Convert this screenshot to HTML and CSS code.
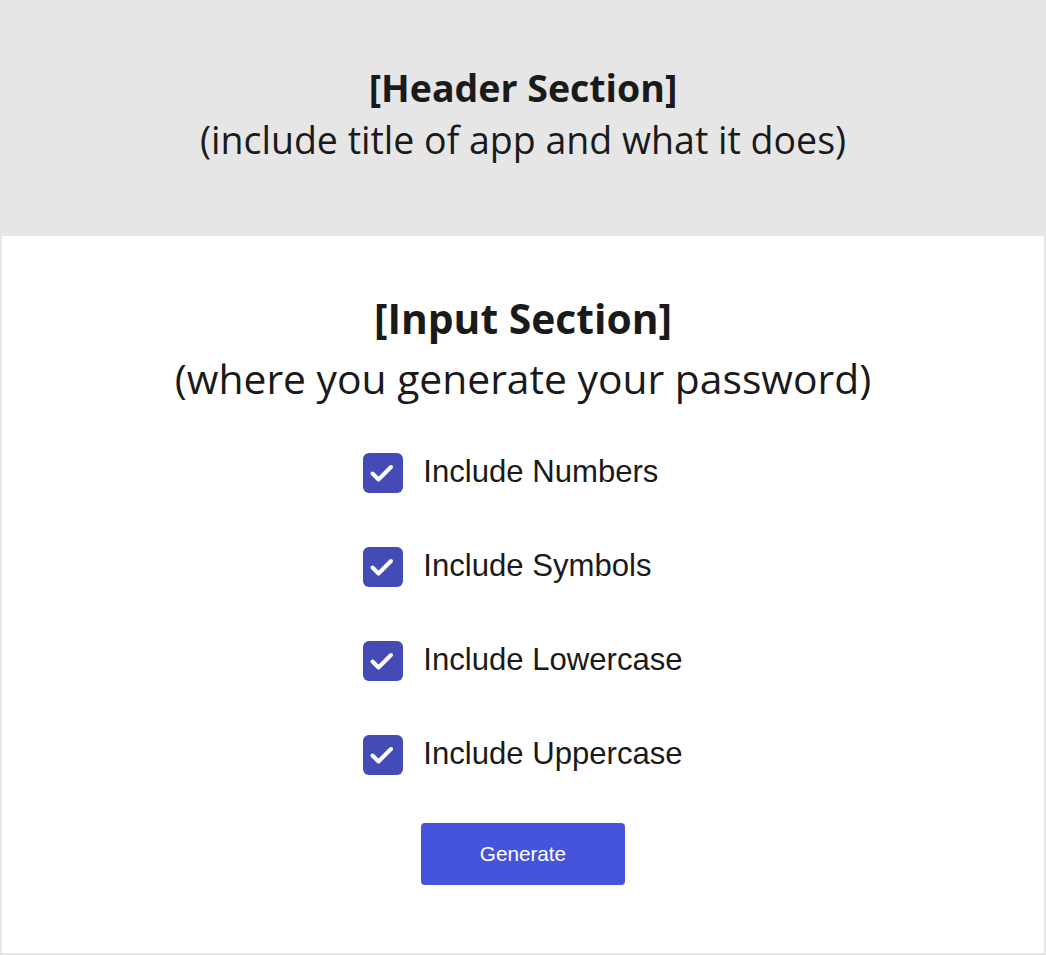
FILE: index.html
```html
<!DOCTYPE html>
<html lang="en">
<head>
<meta charset="utf-8">
<title>Password Generator</title>
<link rel="stylesheet" href="styles.css">
</head>
<body>
<div class="page">
  <header class="header">
    <h1 class="header-title">[Header Section]</h1>
    <p class="header-sub">(include title of app and what it does)</p>
  </header>
  <main class="input">
    <h2 class="input-title">[Input Section]</h2>
    <p class="input-sub">(where you generate your password)</p>
    <div class="options">
      <label class="option"><span class="box"><svg viewBox="0 0 40 40" width="40" height="40"><path d="M9.5 20.5l6 6 12.5-12.5" fill="none" stroke="#fff" stroke-width="4" stroke-linecap="round" stroke-linejoin="round"/></svg></span><span class="label">Include Numbers</span></label>
      <label class="option"><span class="box"><svg viewBox="0 0 40 40" width="40" height="40"><path d="M9.5 20.5l6 6 12.5-12.5" fill="none" stroke="#fff" stroke-width="4" stroke-linecap="round" stroke-linejoin="round"/></svg></span><span class="label">Include Symbols</span></label>
      <label class="option"><span class="box"><svg viewBox="0 0 40 40" width="40" height="40"><path d="M9.5 20.5l6 6 12.5-12.5" fill="none" stroke="#fff" stroke-width="4" stroke-linecap="round" stroke-linejoin="round"/></svg></span><span class="label">Include Lowercase</span></label>
      <label class="option"><span class="box"><svg viewBox="0 0 40 40" width="40" height="40"><path d="M9.5 20.5l6 6 12.5-12.5" fill="none" stroke="#fff" stroke-width="4" stroke-linecap="round" stroke-linejoin="round"/></svg></span><span class="label">Include Uppercase</span></label>
    </div>
    <button class="generate" type="button">Generate</button>
  </main>
</div>
</body>
</html>
```
FILE: styles.css
```css
* { box-sizing: border-box; }
html, body { margin: 0; padding: 0; background: #fff; }
body { font-family: "Open Sans", sans-serif; color: #1a1a1a; }
.page {
  width: 1046px;
  height: 955px;
  border: 2px solid #e6e6e6;
  border-top: 0;
  display: flex;
  flex-direction: column;
}
.header {
  background: #e6e6e6;
  height: 236px;
  margin: 0 -2px;
  display: flex;
  flex-direction: column;
  align-items: center;
  padding-top: 63px;
}
.header-title {
  margin: 0;
  font-size: 37.5px;
  font-weight: 700;
  line-height: 50px;
}
.header-sub {
  margin: 0;
  font-size: 37.5px;
  font-weight: 400;
  line-height: 54px;
}
.input {
  display: flex;
  flex-direction: column;
  align-items: center;
  padding-top: 54px;
}
.input-title {
  margin: 0;
  font-size: 40.8px;
  font-weight: 700;
  line-height: 56px;
}
.input-sub {
  margin: 0;
  font-size: 40.8px;
  font-weight: 400;
  line-height: 64px;
}
.options {
  display: flex;
  flex-direction: column;
  gap: 54px;
  margin-top: 43px;
}
.option {
  display: flex;
  align-items: center;
  gap: 20px;
  height: 40px;
}
.box {
  width: 40px;
  height: 40px;
  border-radius: 6px;
  background: #444bb7;
  display: flex;
}
.label {
  font-family: "Liberation Sans", Arial, sans-serif;
  font-size: 31.1px;
  line-height: 38px;
  padding-bottom: 3px;
  color: #1a1a1a;
}
.generate {
  margin-top: 48px;
  width: 204px;
  height: 62px;
  border: 0;
  border-radius: 4px;
  background: #4653dc;
  color: #fff;
  font-family: "Liberation Sans", Arial, sans-serif;
  font-size: 20.7px;
}
```
